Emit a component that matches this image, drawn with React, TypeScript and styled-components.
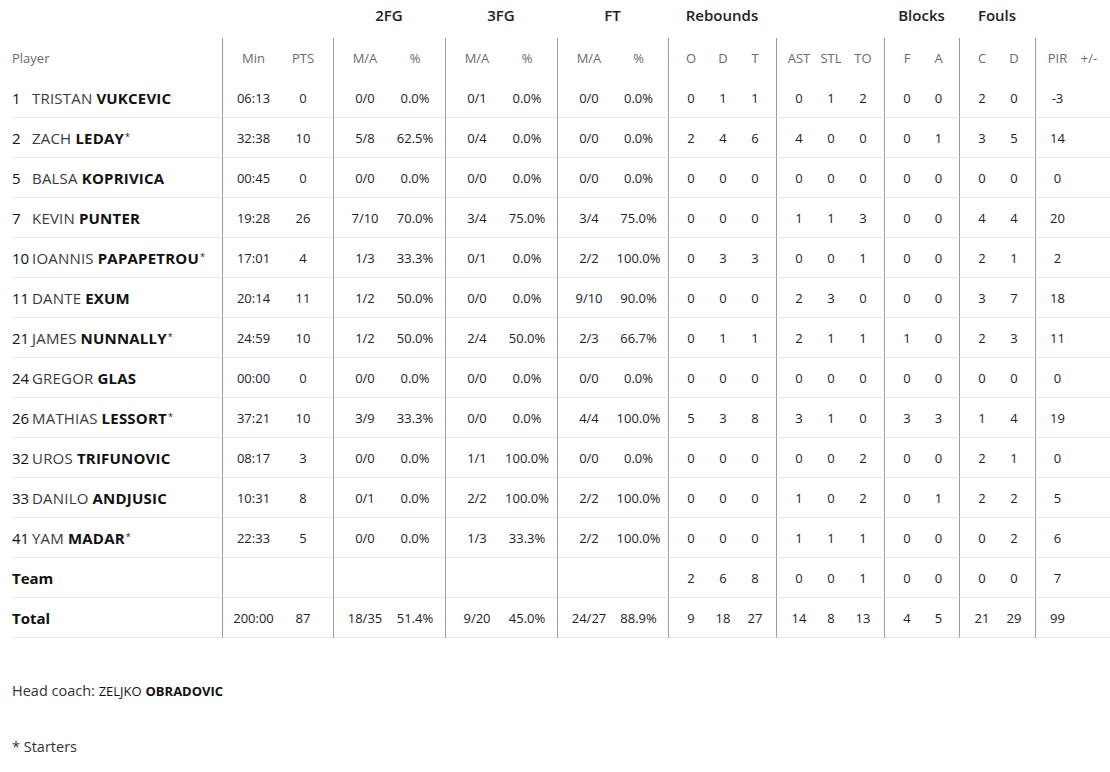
import styled, { createGlobalStyle } from "styled-components";

const GlobalStyle = createGlobalStyle`
  body {
    margin: 0;
    background: #fff;
    font-family: "Open Sans", "Liberation Sans", sans-serif;
    color: #222;
  }
`;

const COLS = "210px 56px 55px 57px 55px 57px 55px 57px 54px 39px 32px 37px 39px 32px 37px 39px 36px 39px 37px 38px 37px";
const GROUP_COLS = "210px 111px 112px 112px 111px 108px 108px 75px 76px 75px";

const Page = styled.div`
  width: 1110px;
  padding-left: 12px;
  box-sizing: border-box;
`;

const GroupRow = styled.div`
  display: grid;
  grid-template-columns: ${GROUP_COLS};
  height: 38px;
  margin-left: -12px;
  padding-left: 12px;
`;

const GroupTitle = styled.div`
  font-size: 15px;
  font-weight: 600;
  color: #222;
  text-align: center;
  line-height: 30px;
`;

const Row = styled.div`
  display: grid;
  grid-template-columns: ${COLS};
  height: 40px;
`;

const Cell = styled.div<{ $start?: boolean; $end?: boolean; $line?: boolean; $head?: boolean }>`
  display: flex;
  align-items: center;
  justify-content: center;
  box-sizing: border-box;
  font-size: 13px;
  color: ${(p) => (p.$head ? "#6b6b6b" : "#222")};
  border-left: ${(p) => (p.$start ? "1px solid #9c9c9c" : "none")};
  padding-left: ${(p) => (p.$start ? "6px" : "0")};
  padding-right: ${(p) => (p.$end ? "5px" : "0")};
  border-bottom: ${(p) => (p.$line ? "1px solid #e8e8e8" : "none")};
  white-space: nowrap;
`;

const PlayerCell = styled.div<{ $line?: boolean; $head?: boolean }>`
  display: flex;
  align-items: center;
  box-sizing: border-box;
  font-size: ${(p) => (p.$head ? "13px" : "15px")};
  color: ${(p) => (p.$head ? "#6b6b6b" : "#222")};
  border-bottom: ${(p) => (p.$line ? "1px solid #e8e8e8" : "none")};
  white-space: nowrap;
`;

const Num = styled.span`
  width: 20px;
  color: #111;
`;

const First = styled.span`
  color: #3a3a3a;
  margin-right: 4px;
  letter-spacing: 0.2px;
`;

const Last = styled.span`
  font-weight: 700;
  color: #111;
  letter-spacing: 0.2px;
`;

const Star = styled.span`
  font-size: 9px;
  align-self: flex-start;
  margin-top: 12px;
  margin-left: 1px;
  color: #111;
`;

const RowLabel = styled.span`
  font-weight: 700;
  color: #111;
`;

const Coach = styled.div`
  margin-top: 43px;
  font-size: 14.5px;
  color: #333;
  line-height: 20px;
`;

const CoachName = styled.span`
  font-size: 13px;
  color: #111;
`;

const CoachLast = styled.span`
  font-size: 13px;
  font-weight: 700;
  color: #111;
`;

const Note = styled.div`
  margin-top: 36px;
  font-size: 14.5px;
  color: #333;
  line-height: 20px;
`;

// group boundaries inside the 20 stat columns
const STARTS = [0, 2, 4, 6, 8, 11, 14, 16, 18];
const ENDS = [1, 3, 5, 7, 10, 13, 15, 17, 19];

type P = [string, string, string, boolean, ...string[]];

const players: P[] = [
  ["1", "TRISTAN", "VUKCEVIC", false, "06:13", "0", "0/0", "0.0%", "0/1", "0.0%", "0/0", "0.0%", "0", "1", "1", "0", "1", "2", "0", "0", "2", "0", "-3", ""],
  ["2", "ZACH", "LEDAY", true, "32:38", "10", "5/8", "62.5%", "0/4", "0.0%", "0/0", "0.0%", "2", "4", "6", "4", "0", "0", "0", "1", "3", "5", "14", ""],
  ["5", "BALSA", "KOPRIVICA", false, "00:45", "0", "0/0", "0.0%", "0/0", "0.0%", "0/0", "0.0%", "0", "0", "0", "0", "0", "0", "0", "0", "0", "0", "0", ""],
  ["7", "KEVIN", "PUNTER", false, "19:28", "26", "7/10", "70.0%", "3/4", "75.0%", "3/4", "75.0%", "0", "0", "0", "1", "1", "3", "0", "0", "4", "4", "20", ""],
  ["10", "IOANNIS", "PAPAPETROU", true, "17:01", "4", "1/3", "33.3%", "0/1", "0.0%", "2/2", "100.0%", "0", "3", "3", "0", "0", "1", "0", "0", "2", "1", "2", ""],
  ["11", "DANTE", "EXUM", false, "20:14", "11", "1/2", "50.0%", "0/0", "0.0%", "9/10", "90.0%", "0", "0", "0", "2", "3", "0", "0", "0", "3", "7", "18", ""],
  ["21", "JAMES", "NUNNALLY", true, "24:59", "10", "1/2", "50.0%", "2/4", "50.0%", "2/3", "66.7%", "0", "1", "1", "2", "1", "1", "1", "0", "2", "3", "11", ""],
  ["24", "GREGOR", "GLAS", false, "00:00", "0", "0/0", "0.0%", "0/0", "0.0%", "0/0", "0.0%", "0", "0", "0", "0", "0", "0", "0", "0", "0", "0", "0", ""],
  ["26", "MATHIAS", "LESSORT", true, "37:21", "10", "3/9", "33.3%", "0/0", "0.0%", "4/4", "100.0%", "5", "3", "8", "3", "1", "0", "3", "3", "1", "4", "19", ""],
  ["32", "UROS", "TRIFUNOVIC", false, "08:17", "3", "0/0", "0.0%", "1/1", "100.0%", "0/0", "0.0%", "0", "0", "0", "0", "0", "2", "0", "0", "2", "1", "0", ""],
  ["33", "DANILO", "ANDJUSIC", false, "10:31", "8", "0/1", "0.0%", "2/2", "100.0%", "2/2", "100.0%", "0", "0", "0", "1", "0", "2", "0", "1", "2", "2", "5", ""],
  ["41", "YAM", "MADAR", true, "22:33", "5", "0/0", "0.0%", "1/3", "33.3%", "2/2", "100.0%", "0", "0", "0", "1", "1", "1", "0", "0", "0", "2", "6", ""],
];

const headers = ["Min", "PTS", "M/A", "%", "M/A", "%", "M/A", "%", "O", "D", "T", "AST", "STL", "TO", "F", "A", "C", "D", "PIR", "+/-"];
const team = ["", "", "", "", "", "", "", "", "2", "6", "8", "0", "0", "1", "0", "0", "0", "0", "7", ""];
const total = ["200:00", "87", "18/35", "51.4%", "9/20", "45.0%", "24/27", "88.9%", "9", "18", "27", "14", "8", "13", "4", "5", "21", "29", "99", ""];

function StatCells({ values, line, head }: { values: string[]; line?: boolean; head?: boolean }) {
  return (
    <>
      {values.map((v, i) => (
        <Cell key={i} $start={STARTS.includes(i)} $end={ENDS.includes(i)} $line={line} $head={head}>
          {v}
        </Cell>
      ))}
    </>
  );
}

export default function App() {
  return (
    <Page>
      <GlobalStyle />
      <GroupRow>
        <div />
        <div />
        <GroupTitle>2FG</GroupTitle>
        <GroupTitle>3FG</GroupTitle>
        <GroupTitle>FT</GroupTitle>
        <GroupTitle>Rebounds</GroupTitle>
        <div />
        <GroupTitle>Blocks</GroupTitle>
        <GroupTitle>Fouls</GroupTitle>
        <div />
      </GroupRow>
      <Row>
        <PlayerCell $head>Player</PlayerCell>
        <StatCells values={headers} head />
      </Row>
      {players.map((p) => {
        const [num, first, last, starter, ...stats] = p;
        return (
          <Row key={num}>
            <PlayerCell $line>
              <Num>{num}</Num>
              <First>{first}</First>
              <Last>{last}</Last>
              {starter && <Star>*</Star>}
            </PlayerCell>
            <StatCells values={stats as string[]} line />
          </Row>
        );
      })}
      <Row>
        <PlayerCell $line>
          <RowLabel>Team</RowLabel>
        </PlayerCell>
        <StatCells values={team} line />
      </Row>
      <Row>
        <PlayerCell $line>
          <RowLabel>Total</RowLabel>
        </PlayerCell>
        <StatCells values={total} line />
      </Row>
      <Coach>
        Head coach: <CoachName>ZELJKO</CoachName> <CoachLast>OBRADOVIC</CoachLast>
      </Coach>
      <Note>* Starters</Note>
    </Page>
  );
}
